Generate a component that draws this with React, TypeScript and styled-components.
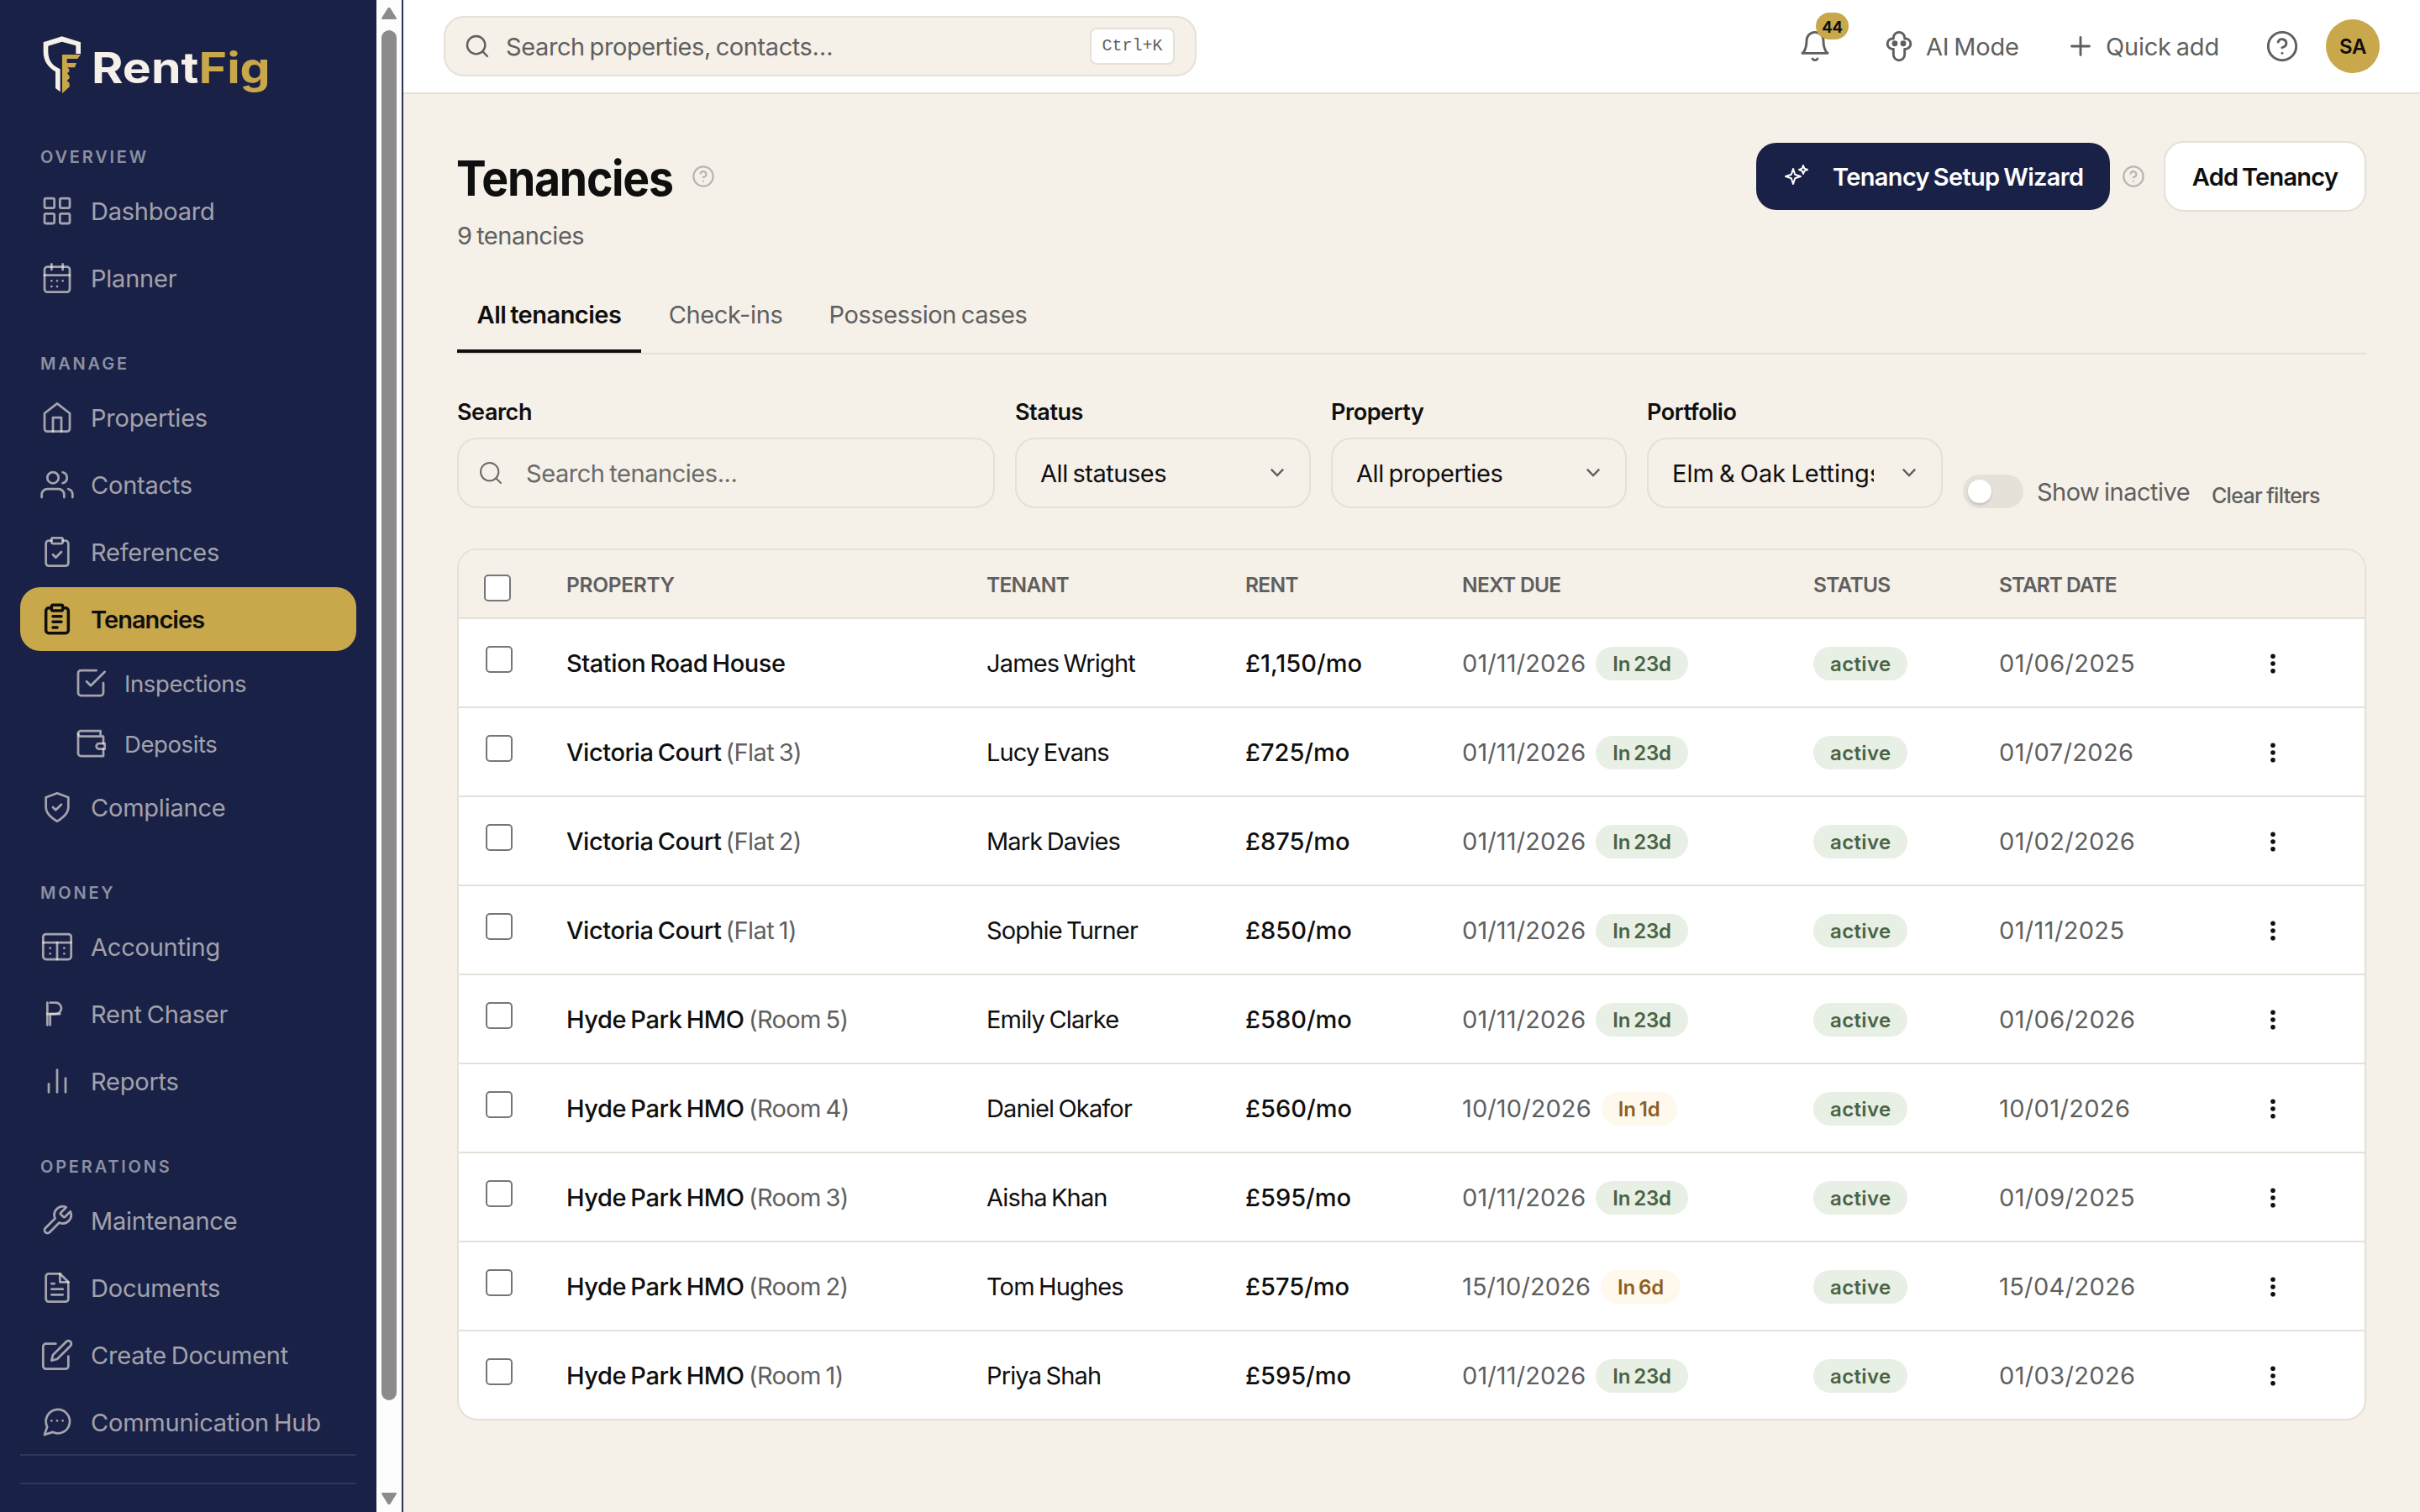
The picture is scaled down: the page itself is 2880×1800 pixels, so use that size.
import React, { useState } from 'react';
import styled, { createGlobalStyle } from 'styled-components';

const GlobalStyle = createGlobalStyle`
  * {
    box-sizing: border-box;
  }
  body {
    margin: 0;
    background: #f5f0e8;
    color: #0f0f0f;
    font-family: Inter, "Liberation Sans", sans-serif;
    font-size: 29px;
    letter-spacing: -0.4px;
    word-spacing: -2px;
  }
  button {
    font: inherit;
    letter-spacing: inherit;
    word-spacing: inherit;
    color: inherit;
    background: none;
    border: 0;
    padding: 0;
  }
`;

const Layout = styled.div`
  display: flex;
  height: 1800px;
  overflow: hidden;
`;

/* ---------- sidebar ---------- */

const Sidebar = styled.aside`
  display: flex;
  flex: 0 0 480px;
  background: #1a2147;
  border-right: 2px solid #2c3259;
`;

const SidebarContent = styled.div`
  flex: 1;
  padding: 43px 24px 0;
`;

const Brand = styled.div`
  display: flex;
  height: 80px;
  padding-left: 27px;
`;

const BrandName = styled.div`
  margin: 4px 0 0 12px;
  height: 68px;
  line-height: 68px;
  font-size: 50.5px;
  font-weight: 700;
  letter-spacing: 0;
  color: #f5f0e8;
  transform: scaleX(1.132);
  transform-origin: left center;

  span {
    color: #c8a84b;
  }
`;

const NavSection = styled.nav`
  display: flex;
  flex-direction: column;
  gap: 4px;
  margin-top: 48px;
`;

const SectionLabel = styled.div`
  height: 31px;
  margin-bottom: 7px;
  padding-left: 24px;
  line-height: 33px;
  font-size: 20px;
  font-weight: 600;
  letter-spacing: 2.8px;
  color: #8c90a1;
`;

const NavItem = styled.a<{ $active?: boolean; $sub?: boolean }>`
  display: flex;
  align-items: center;
  gap: 20px;
  height: ${(p) => (p.$sub ? 68 : 76)}px;
  padding-left: ${(p) => (p.$sub ? 64 : 24)}px;
  border-radius: 24px;
  background: ${(p) => (p.$active ? '#c8a84b' : 'transparent')};
  color: ${(p) => (p.$active ? '#0f0f0f' : 'rgba(245, 240, 232, 0.63)')};
  font-size: ${(p) => (p.$sub ? 27.5 : 29)}px;
  font-weight: ${(p) => (p.$active ? 570 : 380)};
  letter-spacing: ${(p) => (p.$active ? -0.95 : p.$sub ? -0.4 : -0.22)}px;

  span {
    padding-top: ${(p) => (p.$sub ? 2 : 0)}px;
    white-space: nowrap;
  }
`;

const Divider = styled.div`
  height: 2px;
  margin-bottom: 32px;
  background: #2f365a;
`;

const Scrollbar = styled.div`
  display: flex;
  flex-direction: column;
  align-items: center;
  width: 30px;
  padding: 9px 0;
  background: #fdfdfd;
`;

const ScrollThumb = styled.div`
  width: 18px;
  height: 1631px;
  margin: 13px 0 auto;
  border-radius: 9px;
  background: #8b8b8b;
`;

/* ---------- top bar ---------- */

const Page = styled.div`
  flex: 1;
  min-width: 0;
`;

const TopBar = styled.header`
  display: flex;
  align-items: center;
  justify-content: space-between;
  height: 112px;
  padding: 0 48px;
  background: #fff;
  border-bottom: 2px solid #e5e1d6;
  color: #5f5f5f;
`;

const GlobalSearch = styled.div`
  display: flex;
  align-items: center;
  gap: 18px;
  width: 896px;
  height: 72px;
  padding: 0 24px 0 22px;
  border: 2px solid #e5e1d6;
  border-radius: 24px;
  background: #f5f0e8;

  span {
    flex: 1;
    letter-spacing: -0.4px;
  }
`;

const Shortcut = styled.kbd`
  width: 101px;
  height: 44px;
  border: 2px solid #e5e1d6;
  border-radius: 8px;
  background: #fff;
  font: 20px/40px "Liberation Mono", monospace;
  letter-spacing: 0;
  text-align: center;
`;

const TopActions = styled.div`
  display: flex;
  align-items: center;
  gap: 12px;
`;

const TopButton = styled.button<{ $width: number; $indent?: number }>`
  position: relative;
  display: flex;
  align-items: center;
  justify-content: ${(p) => (p.$indent ? 'flex-start' : 'center')};
  gap: 12px;
  width: ${(p) => p.$width}px;
  height: 80px;
  padding-left: ${(p) => p.$indent || 0}px;
  letter-spacing: -0.2px;
  white-space: nowrap;
`;

const Badge = styled.b`
  position: absolute;
  top: 0;
  right: 4px;
  width: 39px;
  height: 32px;
  border-radius: 16px;
  background: #c8a84b;
  color: #0f0f0f;
  font-size: 18.5px;
  font-weight: 650;
  line-height: 35px;
  text-align: center;
`;

const Avatar = styled.div`
  width: 64px;
  height: 64px;
  border-radius: 50%;
  background: #c8a84b;
  color: #0f0f0f;
  font-size: 24px;
  font-weight: 600;
  line-height: 66px;
  text-align: center;
`;

/* ---------- main ---------- */

const Main = styled.main`
  padding: 56px 64px 0;
`;

const PageHeader = styled.div`
  display: flex;
  justify-content: space-between;
`;

const TitleRow = styled.div`
  display: flex;
  align-items: center;
  gap: 23px;
  height: 84px;
`;

const Title = styled.h1`
  width: 257px;
  margin: 3px 0 0 -1px;
  font-size: 58px;
  font-weight: 720;
  letter-spacing: -1.4px;
  white-space: nowrap;
  transform: scaleX(0.924);
  transform-origin: left center;
`;

const Subtitle = styled.p`
  height: 40px;
  margin: 8px 0 0;
  line-height: 41px;
  font-weight: 380;
  letter-spacing: -0.5px;
  color: #5f5f5f;
`;

const HeaderActions = styled.div`
  display: flex;
  align-items: center;
  height: 84px;
`;

const PrimaryButton = styled.button`
  display: flex;
  align-items: center;
  gap: 27px;
  width: 421px;
  height: 80px;
  margin-right: 14px;
  padding-left: 32px;
  border-radius: 24px;
  background: #1a2147;
  color: #fff;
  font-weight: 570;
  letter-spacing: -0.65px;
  white-space: nowrap;
`;

const SecondaryButton = styled.button`
  width: 241px;
  height: 84px;
  margin-left: 22px;
  border: 2px solid #e5e1d6;
  border-radius: 24px;
  background: #fff;
  font-weight: 570;
  letter-spacing: -0.75px;
`;

const Tabs = styled.div`
  display: flex;
  gap: 8px;
  height: 90px;
  margin-top: 32px;
  border-bottom: 2px solid #e4dfd7;
`;

const Tab = styled.button<{ $active: boolean; $width: number }>`
  width: ${(p) => p.$width}px;
  border-bottom: 4px solid ${(p) => (p.$active ? '#0f0f0f' : 'transparent')};
  color: ${(p) => (p.$active ? '#0f0f0f' : '#5f5f5f')};
  font-weight: ${(p) => (p.$active ? 570 : 380)};
  letter-spacing: ${(p) => (p.$active ? -0.5 : -0.4)}px;
`;

const Filters = styled.div`
  display: flex;
  align-items: flex-end;
  gap: 24px;
  margin: 48px 0;
`;

const Field = styled.label<{ $width: number }>`
  width: ${(p) => p.$width}px;
`;

const FieldLabel = styled.div`
  height: 40px;
  margin-bottom: 11px;
  line-height: 42px;
  font-size: 27px;
  font-weight: 570;
  letter-spacing: -0.45px;
`;

const Control = styled.div<{ $placeholder?: boolean; $track?: number }>`
  display: flex;
  align-items: center;
  gap: ${(p) => (p.$placeholder ? 26 : 32)}px;
  height: 84px;
  padding: ${(p) => (p.$placeholder ? '0 22px' : '0 28px')};
  border: 2px solid #e4e0d8;
  border-radius: 24px;
  color: ${(p) => (p.$placeholder ? '#6a6a69' : '#0f0f0f')};
  font-weight: 380;
  letter-spacing: ${(p) => p.$track ?? -0.45}px;
`;

const ControlText = styled.span`
  flex: 1;
  height: 44px;
  overflow: hidden;
  line-height: 45px;
  white-space: nowrap;
`;

const SwitchLabel = styled.div`
  display: flex;
  align-items: center;
  gap: 16px;
  width: 272px;
  height: 40px;
  color: #5f5f5f;
  font-weight: 380;
  letter-spacing: -0.5px;
  white-space: nowrap;

  span {
    padding-top: 1px;
  }
`;

const Switch = styled.button<{ $on: boolean }>`
  flex: 0 0 72px;
  display: flex;
  align-items: center;
  justify-content: ${(p) => (p.$on ? 'flex-end' : 'flex-start')};
  height: 40px;
  padding: 0 6px;
  border-radius: 20px;
  background: ${(p) => (p.$on ? '#1a2147' : '#e5e0d8')};
`;

const Knob = styled.i`
  width: 28px;
  height: 28px;
  border-radius: 50%;
  background: #fff;
  box-shadow: 0 2px 3px rgba(0, 0, 0, 0.16);
`;

const ClearButton = styled.button`
  height: 30px;
  line-height: 31px;
  color: #5f5f5f;
  font-size: 25px;
  font-weight: 450;
  letter-spacing: -0.72px;
  word-spacing: -0.5px;
`;

/* ---------- table ---------- */

const Table = styled.div`
  overflow: hidden;
  border: 2px solid #e5e0d8;
  border-radius: 24px;
  background: #fff;
`;

const Row = styled.div`
  display: grid;
  grid-template-columns: 96px 500px 308px 258px 418px 221px 314px 24px;
  align-items: center;
  height: 106px;
  padding: 1px 0 0 32px;
  border-bottom: 2px solid #e5e1d8;
  font-weight: 380;
  white-space: nowrap;

  &:last-child {
    height: 104px;
    border-bottom: 0;
  }
`;

const HeadRow = styled(Row)`
  height: 82px;
  background: #f5f0e8;
  color: #5f5f5f;
  font-size: 24.5px;
  font-weight: 570;
  letter-spacing: -0.7px;
  word-spacing: 0;
`;

const Checkbox = styled.input<{ $head?: boolean }>`
  appearance: none;
  width: 32px;
  height: 32px;
  margin: ${(p) => (p.$head ? '9px 0 0 -2px' : '0 0 9px')};
  border: 2px solid #767676;
  border-radius: 5px;
  background: #fff;
`;

const HeadCell = styled.div<{ $track?: number }>`
  letter-spacing: ${(p) => p.$track ?? -0.7}px;
`;

const Property = styled.div`
  font-weight: 490;
  letter-spacing: -0.45px;

  small {
    color: #5f5f5f;
    font-size: inherit;
    font-weight: 380;
    letter-spacing: -0.6px;
  }
`;

const Tenant = styled.div`
  letter-spacing: -0.85px;
`;

const Rent = styled.div`
  font-weight: 500;
  letter-spacing: 0;
`;

const DateCell = styled.div`
  display: flex;
  align-items: center;
  gap: 12px;
  color: #5f5f5f;
  letter-spacing: 0.1px;
`;

const StartCell = styled(DateCell)`
  letter-spacing: 0.35px;
`;

const Pill = styled.span<{ $tone?: 'green' | 'amber' }>`
  display: inline-block;
  height: 40px;
  padding: 0 20px;
  border-radius: 20px;
  background: ${(p) => (p.$tone === 'amber' ? '#fef9ec' : '#e8efe5')};
  color: ${(p) => (p.$tone === 'amber' ? '#8f5f22' : '#4a6344')};
  font-size: 24px;
  font-weight: 570;
  line-height: 42px;
  letter-spacing: -0.15px;
`;

const StatusPill = styled(Pill)`
  margin-top: 1px;
  letter-spacing: 0.35px;
`;

/* ---------- icons ---------- */

type IconProps = { size?: number; stroke?: number; color?: string; children: React.ReactNode };

function Icon({ size = 40, stroke = 1.65, color = 'currentColor', children }: IconProps) {
  return (
    <svg
      width={size}
      height={size}
      viewBox="0 0 24 24"
      fill="none"
      stroke={color}
      strokeWidth={stroke}
      strokeLinecap="round"
      strokeLinejoin="round"
    >
      {children}
    </svg>
  );
}

const clipboard = (
  <>
    <path d="M16 4h2a2 2 0 0 1 2 2v14a2 2 0 0 1-2 2H6a2 2 0 0 1-2-2V6a2 2 0 0 1 2-2h2" />
    <rect x="8" y="2" width="8" height="4" rx="1" />
  </>
);

const icons: Record<string, React.ReactNode> = {
  dashboard: (
    <>
      <rect x="3" y="3" width="7" height="7" rx="1" />
      <rect x="14" y="3" width="7" height="7" rx="1" />
      <rect x="14" y="14" width="7" height="7" rx="1" />
      <rect x="3" y="14" width="7" height="7" rx="1" />
    </>
  ),
  planner: (
    <>
      <rect x="3" y="4" width="18" height="18" rx="2" />
      <path d="M16 2v4" />
      <path d="M8 2v4" />
      <path d="M3 10h18" />
      <path d="M8 14h.01M12 14h.01M16 14h.01M8 18h.01M12 18h.01" />
    </>
  ),
  home: (
    <>
      <path d="M3 9l9-7 9 7v11a2 2 0 0 1-2 2H5a2 2 0 0 1-2-2z" />
      <path d="M9 22V12h6v10" />
    </>
  ),
  users: (
    <>
      <path d="M17 21v-2a4 4 0 0 0-4-4H5a4 4 0 0 0-4 4v2" />
      <circle cx="9" cy="7" r="4" />
      <path d="M23 21v-2a4 4 0 0 0-3-3.87" />
      <path d="M16 3.13a4 4 0 0 1 0 7.75" />
    </>
  ),
  references: (
    <>
      {clipboard}
      <path d="m9 14 2 2 4-4" />
    </>
  ),
  tenancies: (
    <>
      {clipboard}
      <path d="M9 10h6M9 14h6M9 18h3" />
    </>
  ),
  inspections: (
    <>
      <path d="m9 11 3 3L22 4" />
      <path d="M21 12v7a2 2 0 0 1-2 2H5a2 2 0 0 1-2-2V5a2 2 0 0 1 2-2h11" />
    </>
  ),
  wallet: (
    <>
      <path d="M21 12V7H5a2 2 0 0 1 0-4h14v4" />
      <path d="M3 5v14a2 2 0 0 0 2 2h16v-5" />
      <path d="M18 12a2 2 0 0 0 0 4h4v-4Z" />
    </>
  ),
  shield: (
    <>
      <path d="M12 22s8-4 8-10V5l-8-3-8 3v7c0 6 8 10 8 10z" />
      <path d="m9 12 2 2 4-4" />
    </>
  ),
  accounting: (
    <>
      <rect x="2" y="3" width="20" height="18" rx="2" />
      <path d="M2 9h20" />
      <path d="M12 9v12" />
      <path d="M7 13h.01M7 17h.01M17 13h.01M17 17h.01" />
    </>
  ),
  rent: (
    <>
      <path d="M5 4v16" />
      <path d="M7 4h4a4 4 0 0 1 4 4 4 4 0 0 1-4 4H5" />
      <path d="M14 12H7v8" />
    </>
  ),
  reports: <path d="M18 20V10M12 20V4M6 20v-6" />,
  wrench: (
    <path d="M14.7 6.3a1 1 0 0 0 0 1.4l1.6 1.6a1 1 0 0 0 1.4 0l3.77-3.77a6 6 0 0 1-7.94 7.94l-6.91 6.91a2.12 2.12 0 0 1-3-3l6.91-6.91a6 6 0 0 1 7.94-7.94l-3.76 3.76z" />
  ),
  document: (
    <>
      <path d="M14 2H6a2 2 0 0 0-2 2v16a2 2 0 0 0 2 2h12a2 2 0 0 0 2-2V8z" />
      <path d="M14 2v6h6" />
      <path d="M8 9h2M8 13h8M8 17h8" />
    </>
  ),
  edit: (
    <>
      <path d="M11 4H4a2 2 0 0 0-2 2v14a2 2 0 0 0 2 2h14a2 2 0 0 0 2-2v-7" />
      <path d="M18.5 2.5a2.121 2.121 0 0 1 3 3L12 15l-4 1 1-4 9.5-9.5z" />
    </>
  ),
  chat: (
    <>
      <path d="m3 21 1.9-5.7a8.5 8.5 0 1 1 3.8 3.8z" />
      <path d="M8 11h.01M12 11h.01M16 11h.01" />
    </>
  ),
  search: (
    <>
      <circle cx="11" cy="11" r="8" />
      <path d="m21 21-4.35-4.35" />
    </>
  ),
  bell: (
    <>
      <path d="M18 8A6 6 0 0 0 6 8c0 7-3 9-3 9h18s-3-2-3-9" />
      <path d="M13.73 21a2 2 0 0 1-3.46 0" />
    </>
  ),
  ai: (
    <>
      <path d="M12 2a4 4 0 0 1 4 4v.6h.6a3.7 3.7 0 0 1 0 7.4H16v4a4 4 0 0 1-8 0v-4h-.6a3.7 3.7 0 0 1 0-7.4H8V6a4 4 0 0 1 4-4z" />
      <circle cx="9" cy="10" r="1.2" fill="currentColor" />
      <circle cx="15" cy="10" r="1.2" fill="currentColor" />
    </>
  ),
  plus: <path d="M12 5v14M5 12h14" />,
  help: (
    <>
      <circle cx="12" cy="12" r="10" />
      <path d="M9.09 9a3 3 0 0 1 5.83 1c0 2-3 3-3 3" />
      <path d="M12 17h.01" />
    </>
  ),
};

function Logo() {
  return (
    <svg width="46" height="69" viewBox="153 129 138 207">
      <path
        fill="#f5f0e8"
        d="M155 151L221 130L288 151V192H271V163L221 149L172 164V186C173 216 186 234 215 247V328L198 315V256C168 238 155 214 155 186Z"
      />
      <path
        fill="#c8a84b"
        d="M222 195H288L277 210H239V225H273L267 241H240L247 247V256L240 262L248 272V280L239 288L248 297V310L222 334Z"
      />
    </svg>
  );
}

function Sparkles() {
  return (
    <svg width="32" height="32" viewBox="0 0 32 32" fill="none" stroke="#fff" strokeWidth="2" strokeLinejoin="round">
      <path d="M12 7L14.2 13.8L21 16L14.2 18.2L12 25L9.8 18.2L3 16L9.8 13.8Z" />
      <path d="M24 3L25.4 6.6L29 8L25.4 9.4L24 13L22.6 9.4L19 8L22.6 6.6Z" />
    </svg>
  );
}

function Kebab() {
  return (
    <svg width="24" height="24" viewBox="0 0 24 24" fill="#0f0f0f">
      <circle cx="12" cy="3.3" r="2.8" />
      <circle cx="12" cy="12" r="2.8" />
      <circle cx="12" cy="20.7" r="2.8" />
    </svg>
  );
}

function Chevron() {
  return (
    <svg width="20" height="12" viewBox="0 0 20 12" fill="none" stroke="#5f5f5f" strokeWidth="2.4">
      <path d="M2.8 1.6L10 9L17.2 1.6" />
    </svg>
  );
}

function ScrollArrow({ down }: { down?: boolean }) {
  return (
    <svg width="18" height="14" viewBox="0 0 18 14" fill="#8b8b8b" stroke="#8b8b8b" strokeWidth="2" strokeLinejoin="round">
      <path d={down ? 'M1 1H17L9.6 13H8.4Z' : 'M1 13H17L9.6 1H8.4Z'} />
    </svg>
  );
}

/* ---------- data ---------- */

type NavEntry = { label: string; icon: string; sub?: boolean };

const sections: { title: string; items: NavEntry[] }[] = [
  {
    title: 'OVERVIEW',
    items: [
      { label: 'Dashboard', icon: 'dashboard' },
      { label: 'Planner', icon: 'planner' },
    ],
  },
  {
    title: 'MANAGE',
    items: [
      { label: 'Properties', icon: 'home' },
      { label: 'Contacts', icon: 'users' },
      { label: 'References', icon: 'references' },
      { label: 'Tenancies', icon: 'tenancies' },
      { label: 'Inspections', icon: 'inspections', sub: true },
      { label: 'Deposits', icon: 'wallet', sub: true },
      { label: 'Compliance', icon: 'shield' },
    ],
  },
  {
    title: 'MONEY',
    items: [
      { label: 'Accounting', icon: 'accounting' },
      { label: 'Rent Chaser', icon: 'rent' },
      { label: 'Reports', icon: 'reports' },
    ],
  },
  {
    title: 'OPERATIONS',
    items: [
      { label: 'Maintenance', icon: 'wrench' },
      { label: 'Documents', icon: 'document' },
      { label: 'Create Document', icon: 'edit' },
      { label: 'Communication Hub', icon: 'chat' },
    ],
  },
];

const tabs = [
  { label: 'All tenancies', width: 219 },
  { label: 'Check-ins', width: 185 },
  { label: 'Possession cases', width: 281 },
];

const selects = [
  { label: 'Status', value: 'All statuses' },
  { label: 'Property', value: 'All properties' },
  { label: 'Portfolio', value: 'Elm & Oak Lettings', track: 0 },
];

const columns = [
  { label: 'PROPERTY', track: -0.3 },
  { label: 'TENANT' },
  { label: 'RENT' },
  { label: 'NEXT DUE' },
  { label: 'STATUS' },
  { label: 'START DATE', track: -1 },
];

const tenancies = [
  { property: 'Station Road House', unit: '', tenant: 'James Wright', rent: '£1,150', due: '01/11/2026', days: 23, start: '01/06/2025' },
  { property: 'Victoria Court', unit: 'Flat 3', tenant: 'Lucy Evans', rent: '£725', due: '01/11/2026', days: 23, start: '01/07/2026' },
  { property: 'Victoria Court', unit: 'Flat 2', tenant: 'Mark Davies', rent: '£875', due: '01/11/2026', days: 23, start: '01/02/2026' },
  { property: 'Victoria Court', unit: 'Flat 1', tenant: 'Sophie Turner', rent: '£850', due: '01/11/2026', days: 23, start: '01/11/2025' },
  { property: 'Hyde Park HMO', unit: 'Room 5', tenant: 'Emily Clarke', rent: '£580', due: '01/11/2026', days: 23, start: '01/06/2026' },
  { property: 'Hyde Park HMO', unit: 'Room 4', tenant: 'Daniel Okafor', rent: '£560', due: '10/10/2026', days: 1, start: '10/01/2026' },
  { property: 'Hyde Park HMO', unit: 'Room 3', tenant: 'Aisha Khan', rent: '£595', due: '01/11/2026', days: 23, start: '01/09/2025' },
  { property: 'Hyde Park HMO', unit: 'Room 2', tenant: 'Tom Hughes', rent: '£575', due: '15/10/2026', days: 6, start: '15/04/2026' },
  { property: 'Hyde Park HMO', unit: 'Room 1', tenant: 'Priya Shah', rent: '£595', due: '01/11/2026', days: 23, start: '01/03/2026' },
];

/* ---------- app ---------- */

function App() {
  const [page, setPage] = useState('Tenancies');
  const [tab, setTab] = useState('All tenancies');
  const [showInactive, setShowInactive] = useState(false);

  return (
    <>
      <GlobalStyle />
      <Layout>
        <Sidebar>
          <SidebarContent>
            <Brand>
              <Logo />
              <BrandName>
                Rent<span>Fig</span>
              </BrandName>
            </Brand>
            {sections.map((section) => (
              <NavSection key={section.title}>
                <SectionLabel>{section.title}</SectionLabel>
                {section.items.map((item) => (
                  <NavItem
                    key={item.label}
                    $active={item.label === page}
                    $sub={item.sub}
                    onClick={() => setPage(item.label)}
                  >
                    <Icon stroke={item.label === page ? 2.1 : 1.65}>{icons[item.icon]}</Icon>
                    <span>{item.label}</span>
                  </NavItem>
                ))}
              </NavSection>
            ))}
            <Divider />
            <Divider />
          </SidebarContent>
          <Scrollbar>
            <ScrollArrow />
            <ScrollThumb />
            <ScrollArrow down />
          </Scrollbar>
        </Sidebar>

        <Page>
          <TopBar>
            <GlobalSearch>
              <Icon size={32} stroke={1.8}>{icons.search}</Icon>
              <span>Search properties, contacts…</span>
              <Shortcut>Ctrl+K</Shortcut>
            </GlobalSearch>
            <TopActions>
              <TopButton $width={88}>
                <Icon stroke={1.75}>{icons.bell}</Icon>
                <Badge>44</Badge>
              </TopButton>
              <TopButton $width={208} $indent={24}>
                <Icon stroke={1.75}>{icons.ai}</Icon>
                <span>AI Mode</span>
              </TopButton>
              <TopButton $width={228} $indent={22}>
                <Icon size={36} stroke={1.9}>{icons.plus}</Icon>
                <span>Quick add</span>
              </TopButton>
              <TopButton $width={80}>
                <Icon stroke={1.75}>{icons.help}</Icon>
              </TopButton>
              <Avatar>SA</Avatar>
            </TopActions>
          </TopBar>

          <Main>
            <PageHeader>
              <div>
                <TitleRow>
                  <Title>Tenancies</Title>
                  <Icon size={28} stroke={1.9} color="#b9b5b0">{icons.help}</Icon>
                </TitleRow>
                <Subtitle>9 tenancies</Subtitle>
              </div>
              <HeaderActions>
                <PrimaryButton>
                  <Sparkles />
                  Tenancy Setup Wizard
                </PrimaryButton>
                <Icon size={28} stroke={1.9} color="#b9b5b0">{icons.help}</Icon>
                <SecondaryButton>Add Tenancy</SecondaryButton>
              </HeaderActions>
            </PageHeader>

            <Tabs>
              {tabs.map((t) => (
                <Tab key={t.label} $active={t.label === tab} $width={t.width} onClick={() => setTab(t.label)}>
                  {t.label}
                </Tab>
              ))}
            </Tabs>

            <Filters>
              <Field $width={640}>
                <FieldLabel>Search</FieldLabel>
                <Control $placeholder>
                  <Icon size={32} stroke={1.5}>{icons.search}</Icon>
                  <ControlText>Search tenancies...</ControlText>
                </Control>
              </Field>
              {selects.map((s) => (
                <Field key={s.label} $width={352}>
                  <FieldLabel>{s.label}</FieldLabel>
                  <Control $track={s.track}>
                    <ControlText>{s.value}</ControlText>
                    <Chevron />
                  </Control>
                </Field>
              ))}
              <SwitchLabel>
                <Switch $on={showInactive} onClick={() => setShowInactive(!showInactive)}>
                  <Knob />
                </Switch>
                <span>Show inactive</span>
              </SwitchLabel>
              <ClearButton>Clear filters</ClearButton>
            </Filters>

            <Table>
              <HeadRow>
                <Checkbox type="checkbox" $head />
                {columns.map((c) => (
                  <HeadCell key={c.label} $track={c.track}>{c.label}</HeadCell>
                ))}
              </HeadRow>
              {tenancies.map((t) => (
                <Row key={t.property + t.unit}>
                  <Checkbox type="checkbox" />
                  <Property>
                    {t.property} {t.unit && <small>({t.unit})</small>}
                  </Property>
                  <Tenant>{t.tenant}</Tenant>
                  <Rent>{t.rent}/mo</Rent>
                  <DateCell>
                    {t.due}
                    <Pill $tone={t.days < 7 ? 'amber' : 'green'}>In {t.days}d</Pill>
                  </DateCell>
                  <div>
                    <StatusPill>active</StatusPill>
                  </div>
                  <StartCell>{t.start}</StartCell>
                  <Kebab />
                </Row>
              ))}
            </Table>
          </Main>
        </Page>
      </Layout>
    </>
  );
}

export default App;
